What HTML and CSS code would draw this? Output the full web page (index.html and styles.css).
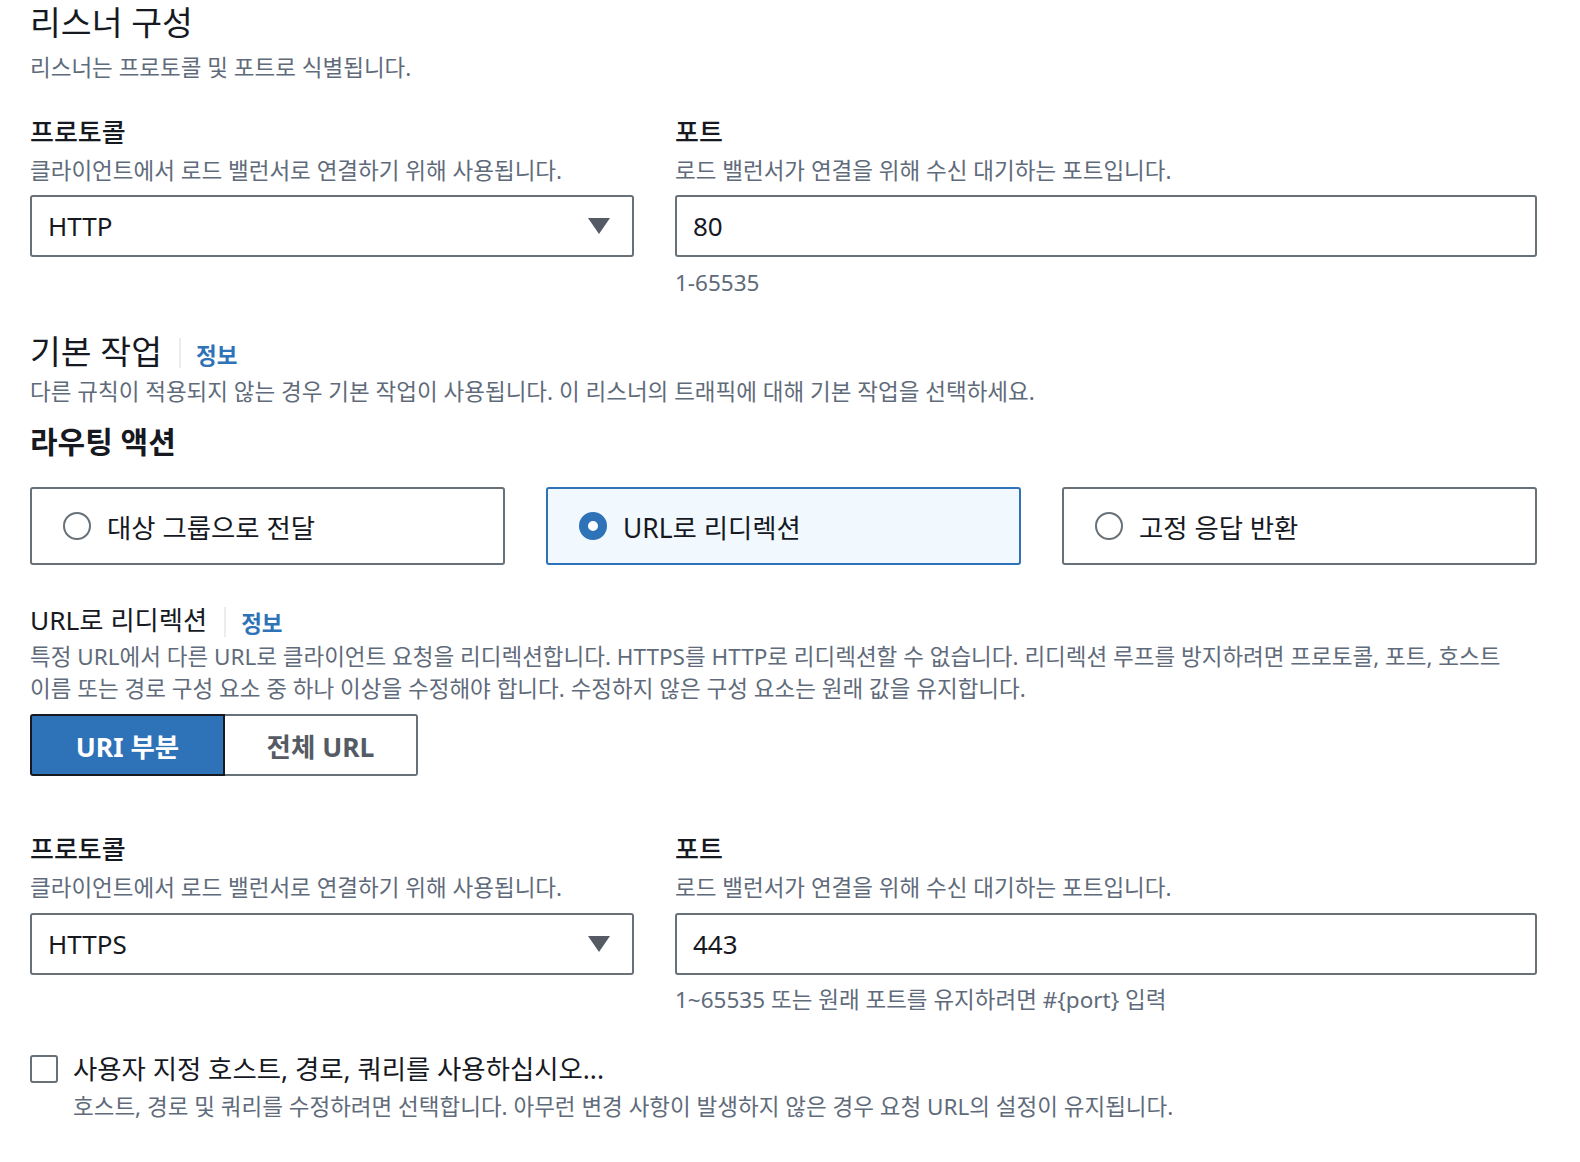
FILE: index.html
```html
<!DOCTYPE html>
<html lang="ko">
<head>
<meta charset="utf-8">
<link rel="stylesheet" href="styles.css">
</head>
<body>
<div class="page">
  <section class="section-head">
    <h2 class="h2">리스너 구성</h2>
    <p class="desc">리스너는 프로토콜 및 포트로 식별됩니다.</p>
  </section>

  <div class="row first-row">
    <div class="field">
      <div class="label">프로토콜</div>
      <div class="desc">클라이언트에서 로드 밸런서로 연결하기 위해 사용됩니다.</div>
      <div class="select"><span>HTTP</span><span class="caret"></span></div>
    </div>
    <div class="field">
      <div class="label">포트</div>
      <div class="desc">로드 밸런서가 연결을 위해 수신 대기하는 포트입니다.</div>
      <div class="input">80</div>
      <div class="hint">1-65535</div>
    </div>
  </div>

  <section class="default-action">
    <div class="h2-line"><h2 class="h2">기본 작업</h2><span class="divider"></span><a class="info">정보</a></div>
    <p class="desc">다른 규칙이 적용되지 않는 경우 기본 작업이 사용됩니다. 이 리스너의 트래픽에 대해 기본 작업을 선택하세요.</p>
    <h3 class="h3">라우팅 액션</h3>
    <div class="tiles">
      <div class="tile"><span class="radio"></span><span>대상 그룹으로 전달</span></div>
      <div class="tile selected"><span class="radio on"></span><span>URL로 리디렉션</span></div>
      <div class="tile"><span class="radio"></span><span>고정 응답 반환</span></div>
    </div>
  </section>

  <section class="redirect">
    <div class="h3-line"><span class="sub-h">URL로 리디렉션</span><span class="divider"></span><a class="info">정보</a></div>
    <p class="desc long">특정 URL에서 다른 URL로 클라이언트 요청을 리디렉션합니다. HTTPS를 HTTP로 리디렉션할 수 없습니다. 리디렉션 루프를 방지하려면 프로토콜, 포트, 호스트<br>이름 또는 경로 구성 요소 중 하나 이상을 수정해야 합니다. 수정하지 않은 구성 요소는 원래 값을 유지합니다.</p>
    <div class="segmented">
      <div class="seg active">URI 부분</div>
      <div class="seg">전체 URL</div>
    </div>
  </section>

  <div class="row second-row">
    <div class="field">
      <div class="label">프로토콜</div>
      <div class="desc">클라이언트에서 로드 밸런서로 연결하기 위해 사용됩니다.</div>
      <div class="select"><span>HTTPS</span><span class="caret"></span></div>
    </div>
    <div class="field">
      <div class="label">포트</div>
      <div class="desc">로드 밸런서가 연결을 위해 수신 대기하는 포트입니다.</div>
      <div class="input">443</div>
      <div class="hint">1~65535 또는 원래 포트를 유지하려면 #{port} 입력</div>
    </div>
  </div>

  <div class="check">
    <span class="box"></span>
    <div class="check-text">
      <div class="check-label">사용자 지정 호스트, 경로, 쿼리를 사용하십시오...</div>
      <div class="desc">호스트, 경로 및 쿼리를 수정하려면 선택합니다. 아무런 변경 사항이 발생하지 않은 경우 요청 URL의 설정이 유지됩니다.</div>
    </div>
  </div>
</div>
</body>
</html>
```

FILE: styles.css
```css
* { box-sizing: border-box; }
html, body { margin: 0; padding: 0; background: #ffffff; }
body {
  font-family: "Noto Sans", "Noto Sans CJK KR", sans-serif;
  color: #16191f;
}
.page {
  padding: 0 43px 0 30px;
}
p { margin: 0; }
h2, h3 { margin: 0; }

.h2 {
  font-size: 33.5px;
  line-height: 44px;
  font-weight: 400;
  color: #16191f;
}
.section-head .desc { margin-top: 9px; }

.desc {
  font-size: 22.5px;
  line-height: 30px;
  color: #5f6b7a;
}

.row {
  display: grid;
  grid-template-columns: 604px 1fr;
  column-gap: 41px;
}
.first-row { margin-top: 32px; }
.second-row { margin-top: 56px; }

.label {
  font-size: 26px;
  line-height: 34px;
  font-weight: 500;
  color: #16191f;
}
.field .desc { margin-top: 7px; }

.select, .input {
  margin-top: 9px;
  height: 62px;
  border: 2px solid #687078;
  border-radius: 3px;
  display: flex;
  align-items: center;
  padding: 0 16px;
  font-size: 26px;
  color: #16191f;
}
.second-row .select, .second-row .input { margin-top: 10px; }
.select { justify-content: space-between; padding-right: 22px; }
.caret {
  width: 0; height: 0;
  border-left: 11px solid transparent;
  border-right: 11px solid transparent;
  border-top: 16px solid #545b64;
}
.hint {
  margin-top: 11px;
  font-size: 22.5px;
  line-height: 30px;
  color: #5f6b7a;
}
.second-row .hint { margin-top: 10px; }

.default-action { margin-top: 31px; }
.h2-line { display: flex; align-items: center; height: 44px; }
.divider {
  display: inline-block;
  width: 2px;
  height: 30px;
  background: #eaeded;
  margin: 4px 15px 0 17px;
}
.info {
  font-size: 22.5px;
  font-weight: 700;
  color: #2e72b8;
  margin-top: 6px;
}
.default-action .desc { margin-top: 4px; }
.h3 {
  margin-top: 15px;
  font-size: 30px;
  line-height: 40px;
  font-weight: 700;
}

.tiles {
  margin-top: 25px;
  display: grid;
  grid-template-columns: repeat(3, 1fr);
  column-gap: 41px;
}
.tile {
  height: 78px;
  border: 2px solid #687078;
  border-radius: 3px;
  display: flex;
  align-items: center;
  padding-left: 31px;
  font-size: 26.4px;
  gap: 16px;
}
.tile.selected {
  border-color: #2e72b8;
  background: #f1f8fe;
}
.radio {
  width: 28px; height: 28px;
  border-radius: 50%;
  border: 2px solid #687078;
  background: #fff;
  flex: none;
}
.radio.on {
  border: 9px solid #2e72b8;
}

.redirect { margin-top: 37px; }
.h3-line { display: flex; align-items: center; height: 36px; }
.h3-line .info { margin-top: 4px; }
.sub-h { font-size: 26.3px; line-height: 36px; }
.redirect .desc.long { margin-top: 3px; line-height: 32px; white-space: nowrap; }
.segmented {
  margin-top: 9px;
  display: flex;
  width: 388px;
  height: 62px;
}
.seg {
  display: flex;
  align-items: center;
  justify-content: center;
  font-size: 26.5px;
  font-weight: 700;
  color: #545b64;
  border: 2px solid #687078;
  border-left: none;
  border-radius: 0 3px 3px 0;
  width: 193px;
}
.seg.active {
  background: #2e72b8;
  color: #ffffff;
  border: 2px solid #16191f;
  border-radius: 3px 0 0 3px;
  width: 195px;
}

.check {
  margin-top: 37px;
  display: flex;
  gap: 15px;
}
.box {
  width: 28px; height: 28px;
  border: 2px solid #687078;
  border-radius: 3px;
  margin-top: 3px;
  flex: none;
}
.check-label { font-size: 26.4px; line-height: 34px; }
.check-text .desc { margin-top: 6px; }
```
